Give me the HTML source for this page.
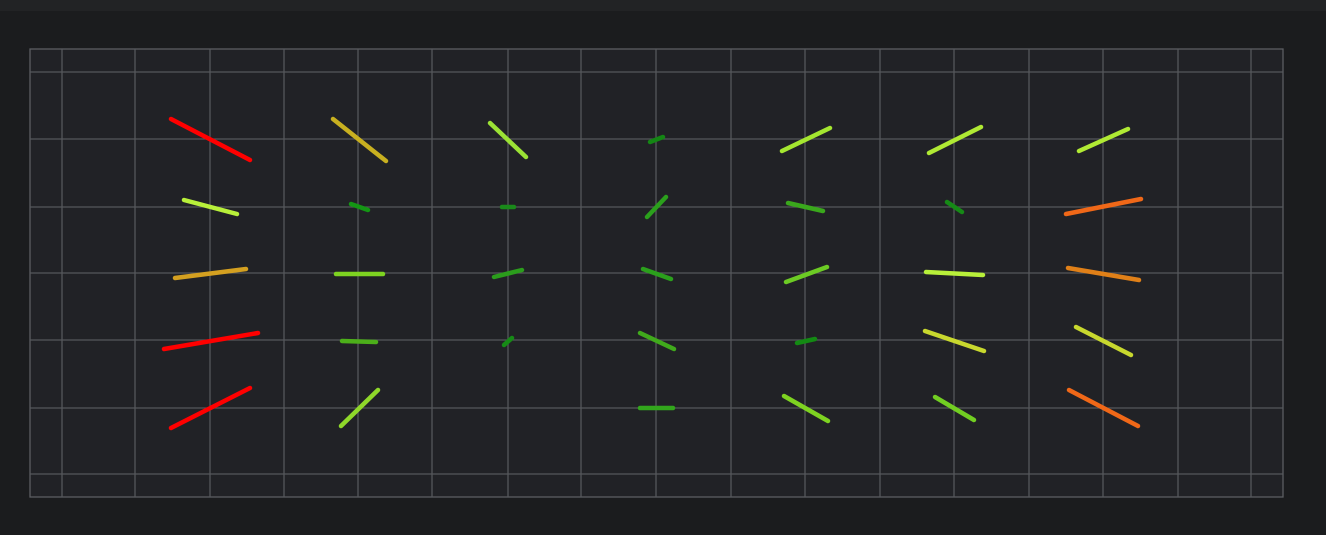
<!DOCTYPE html><html><head><style>html,body{margin:0;padding:0;background:#1b1c1e;width:1326px;height:535px;overflow:hidden}</style></head><body>
<svg width="1326" height="535" xmlns="http://www.w3.org/2000/svg" style="display:block">
<rect x="0" y="0" width="1326" height="11" fill="#222325"/>
<rect x="30" y="49" width="1253" height="448" fill="#212226" stroke="#5c5e62" stroke-width="1.3"/>
<g stroke="#55575b" stroke-width="1.3">
<line x1="62" y1="49" x2="62" y2="497"/><line x1="135" y1="49" x2="135" y2="497"/><line x1="210" y1="49" x2="210" y2="497"/><line x1="284" y1="49" x2="284" y2="497"/><line x1="358" y1="49" x2="358" y2="497"/><line x1="432" y1="49" x2="432" y2="497"/><line x1="508" y1="49" x2="508" y2="497"/><line x1="581" y1="49" x2="581" y2="497"/><line x1="656" y1="49" x2="656" y2="497"/><line x1="731" y1="49" x2="731" y2="497"/><line x1="805" y1="49" x2="805" y2="497"/><line x1="880" y1="49" x2="880" y2="497"/><line x1="954" y1="49" x2="954" y2="497"/><line x1="1029" y1="49" x2="1029" y2="497"/><line x1="1103" y1="49" x2="1103" y2="497"/><line x1="1178" y1="49" x2="1178" y2="497"/><line x1="1251" y1="49" x2="1251" y2="497"/>
<line x1="30" y1="72" x2="1283" y2="72"/><line x1="30" y1="139" x2="1283" y2="139"/><line x1="30" y1="207" x2="1283" y2="207"/><line x1="30" y1="273" x2="1283" y2="273"/><line x1="30" y1="340" x2="1283" y2="340"/><line x1="30" y1="408" x2="1283" y2="408"/><line x1="30" y1="474" x2="1283" y2="474"/>
</g>
<g stroke-width="4.5" stroke-linecap="round">
<line x1="171" y1="119" x2="250" y2="160" stroke="#ff0000"/>
<line x1="184" y1="200" x2="237" y2="214" stroke="#b8f03a"/>
<line x1="175" y1="278" x2="246" y2="269" stroke="#d4a020"/>
<line x1="164" y1="349" x2="258" y2="333" stroke="#ff0000"/>
<line x1="171" y1="428" x2="250" y2="388" stroke="#ff0000"/>
<line x1="333" y1="119" x2="386" y2="161" stroke="#c8b020"/>
<line x1="351" y1="204" x2="368" y2="210" stroke="#149614"/>
<line x1="336" y1="274" x2="383" y2="274" stroke="#7ed321"/>
<line x1="342" y1="341" x2="376" y2="342" stroke="#4caf1a"/>
<line x1="341" y1="426" x2="378" y2="390" stroke="#8fd82a"/>
<line x1="490" y1="123" x2="526" y2="157" stroke="#9be235"/>
<line x1="502" y1="207" x2="514" y2="207" stroke="#1a8a1a"/>
<line x1="494" y1="277" x2="522" y2="270" stroke="#2b9d1c"/>
<line x1="504" y1="345" x2="512" y2="338" stroke="#168a16"/>
<line x1="650" y1="142" x2="663" y2="137" stroke="#148614"/>
<line x1="647" y1="217" x2="666" y2="197" stroke="#2ba01c"/>
<line x1="643" y1="269" x2="671" y2="279" stroke="#2ba01c"/>
<line x1="640" y1="333" x2="674" y2="349" stroke="#40aa1c"/>
<line x1="640" y1="408" x2="673" y2="408" stroke="#32a61c"/>
<line x1="782" y1="151" x2="830" y2="128" stroke="#a4e630"/>
<line x1="788" y1="203" x2="823" y2="211" stroke="#3aa81c"/>
<line x1="786" y1="282" x2="827" y2="267" stroke="#6ccb24"/>
<line x1="797" y1="343" x2="815" y2="339" stroke="#138a13"/>
<line x1="784" y1="396" x2="828" y2="421" stroke="#7ed321"/>
<line x1="929" y1="153" x2="981" y2="127" stroke="#b0ea34"/>
<line x1="947" y1="202" x2="962" y2="212" stroke="#168a16"/>
<line x1="926" y1="272" x2="983" y2="275" stroke="#b8f03a"/>
<line x1="925" y1="331" x2="984" y2="351" stroke="#c8d82e"/>
<line x1="935" y1="397" x2="974" y2="420" stroke="#72ce22"/>
<line x1="1079" y1="151" x2="1128" y2="129" stroke="#b0ea34"/>
<line x1="1066" y1="214" x2="1141" y2="199" stroke="#f06818"/>
<line x1="1068" y1="268" x2="1139" y2="280" stroke="#e08018"/>
<line x1="1076" y1="327" x2="1131" y2="355" stroke="#c8d82e"/>
<line x1="1069" y1="390" x2="1138" y2="426" stroke="#f06818"/>
</g>
</svg>
</body></html>
